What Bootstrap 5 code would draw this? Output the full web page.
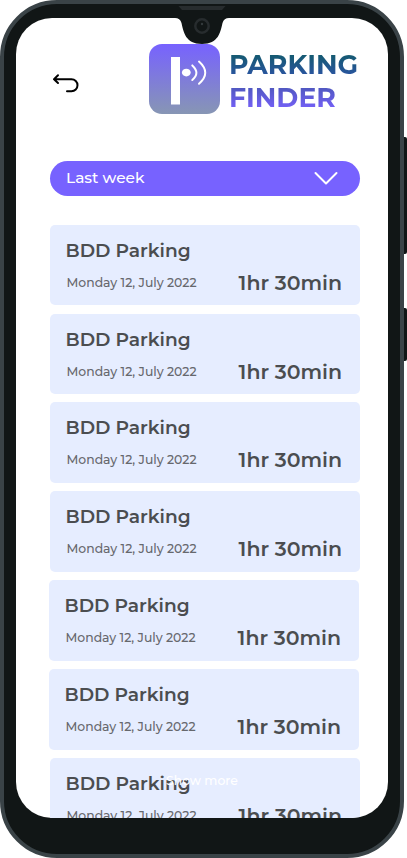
<!DOCTYPE html>
<html lang="en">
<head>
<meta charset="utf-8">
<meta name="viewport" content="width=device-width, initial-scale=1">
<title>Parking Finder</title>
<link href="https://cdn.jsdelivr.net/npm/bootstrap@5.3.0/dist/css/bootstrap.min.css" rel="stylesheet">
<style>
body{font-family:Montserrat,Inter,"Open Sans",sans-serif;width:407px;height:858px;background:#fff}
.phone{width:404px;height:858px;background:#111616;border:4px solid #3a4347;border-radius:57px;padding:14px 12px 36px}
.screen{width:372px;height:800px;border-radius:36px;background:#fff}
.notch{left:175px;top:5px;z-index:3}
.side{left:404px;width:3px;background:#111616;border-radius:0 2px 2px 0}
.side-a{top:137px;height:117px}
.side-b{top:308px;height:53px}
.top-bar{height:97px;padding:26px 0 0 34px}
.back{width:30px;height:24px;padding:0;margin-top:27px}
.app-logo{margin-left:69px}
.app-name{font-size:26.7px;line-height:33px;font-weight:700;margin:4px 0 0 9px;background:linear-gradient(#145a70 10%,#28559b 38%,#5058c0 60%,#7560f8 92%);-webkit-background-clip:text;background-clip:text;color:transparent}
.app-name span{display:block;white-space:nowrap}
.period{margin:46px 0 0 34px;width:310px;height:35px;background:#7762ff;border:0;color:#fff;padding:0 22px 0 16px;font-size:15.4px;font-weight:500}
.period span{position:relative;top:-.5px}
.stays{margin:28.8px 0 0 34px;gap:8.35px}
.stay{width:310px;height:80.5px;flex:none;background:#e6edff;border-radius:5px;padding:14px 18px 0 16px;color:#4b4d50}
.stay.shifted{margin-left:-1px}
.place{font-size:18.6px;line-height:24px;font-weight:600;margin:0 0 0 -.5px}
.when{font-size:12.4px;color:#66686d;line-height:16px;margin-left:.5px;font-weight:500}
.time{font-size:20.5px;line-height:26px;font-weight:600}
.info{margin-top:7px}
.more{left:166px;top:772px;font-size:12.4px;line-height:18px;color:#fff;z-index:2;font-weight:500}
</style>
<script src="https://cdn.jsdelivr.net/npm/bootstrap@5.3.0/dist/js/bootstrap.bundle.min.js"></script>
</head>
<body class="position-relative overflow-hidden">
<div class="phone">
  <main class="screen overflow-hidden">
    <header class="top-bar d-flex align-items-start">
      <button class="btn back border-0 d-flex" aria-label="Back">
        <svg width="30" height="24" viewBox="50 71 30 24" fill="none" stroke="#000" stroke-width="2" stroke-linecap="round" stroke-linejoin="round"><path d="M58 75.300L54 79.200L58 83M54 79.200H71.500A6 6 0 0 1 71.500 91.200H67"/></svg>
      </button>
      <svg class="app-logo flex-shrink-0" width="71" height="70" viewBox="149 44 71 70">
        <defs><linearGradient id="g" x2="0" y2="1"><stop offset="0" stop-color="#7762ff"/><stop offset="1" stop-color="#8796b4"/></linearGradient></defs>
        <rect x="149" y="44" width="71" height="70" rx="13" fill="url(#g)"/>
        <rect x="171" y="57" width="9" height="47.500" fill="#fff"/>
        <ellipse cx="186.300" cy="72.600" rx="4.400" ry="3.900" fill="#fff"/>
        <path d="M192.300 65.400Q200.500 73 192.300 80M199 61.600Q211.500 73 199 83.800" fill="none" stroke="#fff" stroke-width="2" stroke-linecap="round"/>
      </svg>
      <h1 class="app-name"><span>PARKING</span><span>FINDER</span></h1>
    </header>
    <button class="period btn rounded-pill d-flex align-items-center justify-content-between">
      <span>Last week</span>
      <svg width="24" height="15" viewBox="0 0 24 15" fill="none" stroke="#fff" stroke-width="2" stroke-linecap="round" stroke-linejoin="round"><path d="M1.500 2L12 12.500L22.500 2"/></svg>
    </button>
    <section class="stays d-flex flex-column">
      <article class="stay"><h2 class="place">BDD Parking</h2><div class="info d-flex justify-content-between align-items-center"><span class="when">Monday 12, July 2022</span><span class="time">1hr 30min</span></div></article>
      <article class="stay"><h2 class="place">BDD Parking</h2><div class="info d-flex justify-content-between align-items-center"><span class="when">Monday 12, July 2022</span><span class="time">1hr 30min</span></div></article>
      <article class="stay"><h2 class="place">BDD Parking</h2><div class="info d-flex justify-content-between align-items-center"><span class="when">Monday 12, July 2022</span><span class="time">1hr 30min</span></div></article>
      <article class="stay"><h2 class="place">BDD Parking</h2><div class="info d-flex justify-content-between align-items-center"><span class="when">Monday 12, July 2022</span><span class="time">1hr 30min</span></div></article>
      <article class="stay shifted"><h2 class="place">BDD Parking</h2><div class="info d-flex justify-content-between align-items-center"><span class="when">Monday 12, July 2022</span><span class="time">1hr 30min</span></div></article>
      <article class="stay shifted"><h2 class="place">BDD Parking</h2><div class="info d-flex justify-content-between align-items-center"><span class="when">Monday 12, July 2022</span><span class="time">1hr 30min</span></div></article>
      <article class="stay"><h2 class="place">BDD Parking</h2><div class="info d-flex justify-content-between align-items-center"><span class="when">Monday 12, July 2022</span><span class="time">1hr 30min</span></div></article>
    </section>
  </main>
</div>
<svg class="notch position-absolute" width="54" height="40" viewBox="175 5 54 40">
  <path d="M175 18Q180 18 181.500 23C183.500 32 185.500 44 202 44S220.500 32 222.500 23Q224 18 229 18V17H175Z" fill="#111616"/>
  <path d="M178.500 6H225.500L222 10H182Z" fill="#272c2e"/>
  <circle cx="202" cy="26" r="6.700" fill="none" stroke="#272c2e" stroke-width="2.500"/>
  <circle cx="202" cy="24" r="1.200" fill="#343b3d"/>
</svg>
<span class="side side-a position-absolute"></span>
<span class="side side-b position-absolute"></span>
<span class="more position-absolute">Show more</span>
</body>
</html>
